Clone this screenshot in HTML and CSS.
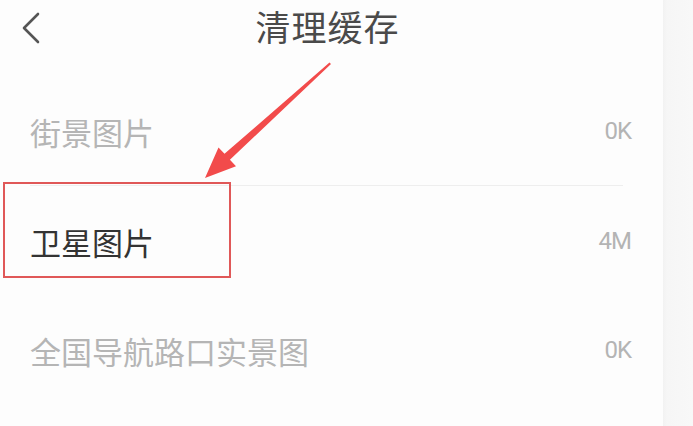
FILE: index.html
```html
<!DOCTYPE html>
<html lang="zh-CN">
<head>
<meta charset="utf-8">
<title>清理缓存</title>
<link rel="stylesheet" href="styles.css">
</head>
<body>
<div class="app">
  <main class="panel">
    <header class="header">
      <svg class="back" width="22" height="32" viewBox="0 0 22 32">
        <polyline points="17,2 3,16 17,30" fill="none" stroke="#555" stroke-width="2.6" stroke-linecap="round" stroke-linejoin="round"/>
      </svg>
      <h1 class="title">清理缓存</h1>
    </header>
    <ul class="list">
      <li class="row muted"><span class="name">街景图片</span><span class="size">0K</span></li>
      <li class="divider"></li>
      <li class="row"><span class="name">卫星图片</span><span class="size">4M</span></li>
      <li class="row muted"><span class="name">全国导航路口实景图</span><span class="size">0K</span></li>
    </ul>
    <div class="highlight"></div>
    <svg class="arrow" width="663" height="426" viewBox="0 0 663 426">
      <polygon points="329.5,62.5 224.5,153.8 218.5,147.5 205,178 236,166.2 229.9,159.7 331,64" fill="#f24b4b"/>
    </svg>
  </main>
  <aside class="strip"></aside>
</div>
</body>
</html>
```

FILE: styles.css
```css
html, body {
  margin: 0;
  padding: 0;
  background: #fdfdfd;
}
body {
  font-family: "Noto Sans CJK SC", "Noto Sans", sans-serif;
}
.app {
  display: flex;
  width: 693px;
  height: 426px;
  overflow: hidden;
}
.panel {
  position: relative;
  width: 663px;
  flex: none;
  background: #fdfdfd;
}
.strip {
  flex: 1;
  background: linear-gradient(to right, #f2f2f2 0px, #f6f6f6 4px, #f8f8f8 100%);
}
.header {
  position: relative;
  height: 76px;
  display: flex;
  align-items: flex-start;
  justify-content: center;
}
.back {
  position: absolute;
  left: 21px;
  top: 12px;
}
.title {
  margin: 0;
  padding-top: 7px;
  padding-right: 8px;
  font-size: 35px;
  font-weight: 400;
  line-height: 38px;
  color: #4a4a4a;
  letter-spacing: 1px;
}
.list {
  list-style: none;
  margin: 0;
  padding: 0;
}
.row {
  height: 109px;
  display: flex;
  align-items: center;
  justify-content: space-between;
  padding: 0 32px 0 30px;
  box-sizing: border-box;
}
.name {
  font-size: 31px;
  color: #333333;
  line-height: 34px;
  padding-top: 2px;
}
.size {
  font-family: Roboto, "Liberation Sans", sans-serif;
  font-size: 24px;
  color: #b4b4b4;
  letter-spacing: -1px;
}
.muted .name {
  color: #b5b5b5;
}
.divider {
  height: 1px;
  margin: 0 40px 0 30px;
  background: #eeeeee;
}
.highlight {
  position: absolute;
  left: 3px;
  top: 182px;
  width: 228px;
  height: 96px;
  border: 2px solid #e05858;
  box-sizing: border-box;
}
.arrow {
  position: absolute;
  left: 0;
  top: 0;
  pointer-events: none;
}
```
